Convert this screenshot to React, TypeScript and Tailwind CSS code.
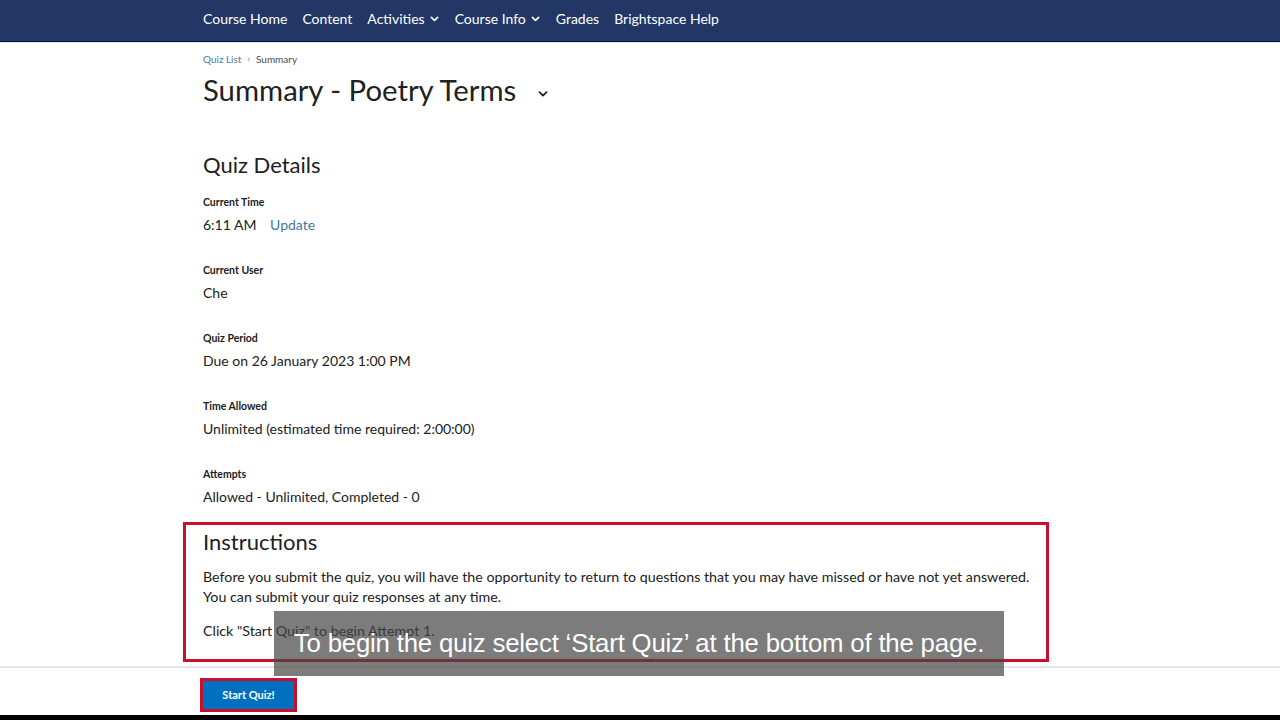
import React from "react";

const Field = ({ label, children }: { label: string; children: React.ReactNode }) => (
  <div className="h-[68px]">
    <div className="text-[10.5px] font-bold text-[#202122] leading-[16px]">{label}</div>
    <div className="mt-[5px] text-[14px] text-[#202122] leading-[20px]">{children}</div>
  </div>
);

const Chevron = ({ className }: { className?: string }) => (
  <svg viewBox="0 0 10 6" className={className} fill="none" stroke="currentColor" strokeWidth="1.8" strokeLinecap="round" strokeLinejoin="round">
    <path d="M1.5 1.2 L5 4.6 L8.5 1.2" />
  </svg>
);

export default function App() {
  return (
    <div
      className="relative h-[720px] w-[1280px] overflow-hidden bg-white flex flex-col"
      style={{ fontFamily: "Lato, 'Noto Sans', sans-serif" }}
    >
      {/* Top nav */}
      <div className="h-[41px] shrink-0 bg-[#233767] flex items-center pb-[4px] pl-[203px] gap-[15px] text-white text-[14px]">
        <span>Course Home</span>
        <span>Content</span>
        <span className="flex items-center gap-[5px]">Activities<Chevron className="w-[9px] h-[6px]" /></span>
        <span className="flex items-center gap-[5px] ml-[1px]">Course Info<Chevron className="w-[9px] h-[6px]" /></span>
        <span className="ml-[1px]">Grades</span>
        <span>Brightspace Help</span>
      </div>
      <div className="h-[1px] shrink-0 bg-[#0b1634]" />
      <div className="h-[1px] shrink-0 bg-[#d6e2f0]" />

      {/* Main content */}
      <div className="flex-1 overflow-hidden pl-[183px] pr-[231px]">
        <div className="pl-[20px]">
          <div className="mt-[9px] flex items-center gap-[6px] text-[10px] leading-[14px]">
            <span className="text-[#4b7d9a]">Quiz List</span>
            <span className="text-[#6e7477] text-[9px]">›</span>
            <span className="text-[#494c4e]">Summary</span>
          </div>
          <div className="mt-[4px] flex items-center h-[40px]">
            <h1 className="text-[29.3px] font-normal text-[#202122] leading-[40px]">Summary - Poetry Terms</h1>
            <Chevron className="ml-[22px] mt-[8px] w-[10px] h-[6px] text-[#202122]" />
          </div>
          <h2 className="mt-[40px] text-[22px] text-[#202122] leading-[30px]">Quiz Details</h2>
          <div className="mt-[14px]">
            <Field label="Current Time">
              6:11 AM <span className="ml-[10px] text-[#3d7aa3]">Update</span>
            </Field>
            <Field label="Current User">Che</Field>
            <Field label="Quiz Period">Due on 26 January 2023 1:00 PM</Field>
            <Field label="Time Allowed">Unlimited (estimated time required: 2:00:00)</Field>
            <Field label="Attempts">Allowed - Unlimited, Completed - 0</Field>
          </div>
        </div>

        {/* Instructions */}
        <div className="mt-[-12px] h-[140px] border-[3px] border-[#c8102e] pl-[17px] pr-[6px]">
          <h2 className="mt-[2px] text-[22px] text-[#202122] leading-[30px]">Instructions</h2>
          <p className="mt-[10px] text-[14.25px] text-[#202122] leading-[20px]">
            Before you submit the quiz, you will have the opportunity to return to questions that you may have missed or have not yet answered.
            <br />
            You can submit your quiz responses at any time.
          </p>
          <p className="mt-[14px] text-[14.25px] text-[#202122] leading-[20px]">Click "Start Quiz" to begin Attempt 1.</p>
        </div>
      </div>

      {/* Footer */}
      <div className="shrink-0 h-[2px] bg-[#e3e6e8]" />
      <div className="shrink-0 h-[47px] bg-white pl-[200px] pt-[10px]">
        <div className="w-[97px] h-[34px] border-[3px] border-[#c8102e]">
          <button className="w-full h-full bg-[#0070bf] text-white text-[11px] font-bold">Start Quiz!</button>
        </div>
      </div>
      <div className="shrink-0 h-[5px] bg-black" />

      {/* Caption overlay */}
      <div className="absolute left-[274px] top-[611px] w-[730px] h-[65px] bg-[rgba(68,68,68,0.7)] flex items-center justify-center">
        <span
          className="text-white text-[25.8px] tracking-[-0.2px]"
          style={{ fontFamily: "'Liberation Sans', Arial, sans-serif" }}
        >
          To begin the quiz select ‘Start Quiz’ at the bottom of the page.
        </span>
      </div>
    </div>
  );
}
